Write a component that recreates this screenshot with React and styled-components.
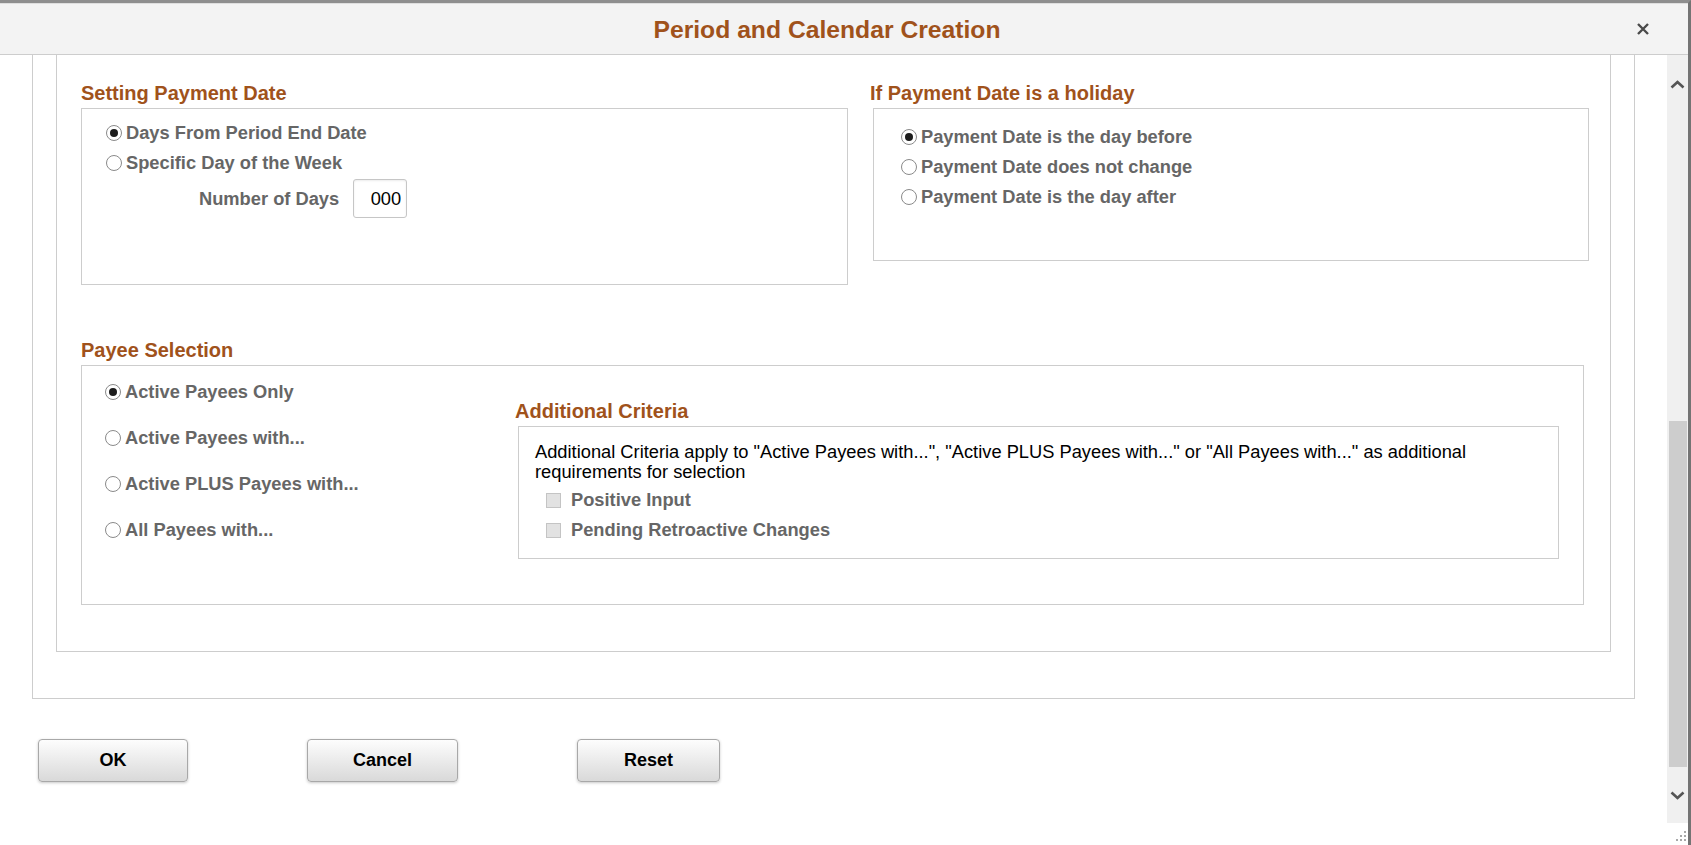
import React from "react";
import styled, { createGlobalStyle } from "styled-components";

const GlobalStyle = createGlobalStyle`
  html, body {
    margin: 0;
    padding: 0;
    background: #fff;
    overflow: hidden;
  }
  body {
    font-family: "Liberation Sans", Arial, sans-serif;
  }
  * {
    box-sizing: border-box;
  }
`;

const BROWN = "#a0521b";

const Window = styled.div`
  width: 1691px;
  height: 845px;
  display: flex;
  flex-direction: column;
  border-top: 3px solid #8e8e8e;
  border-right: 3px solid #747474;
`;

const Header = styled.header`
  height: 52px;
  flex-shrink: 0;
  display: flex;
  align-items: center;
  padding-right: 33px;
  background: #f3f3f3;
  border-top: 1px solid #dedede;
  border-bottom: 1px solid #cdcdcd;
`;

const Title = styled.h1`
  flex: 1;
  margin: 0;
  padding: 2px 0 0 23px;
  text-align: center;
  font-size: 24.7px;
  font-weight: 700;
  color: ${BROWN};
`;

const CloseButton = styled.button`
  width: 24px;
  height: 24px;
  padding: 0;
  border: none;
  background: none;
  display: flex;
  align-items: center;
  justify-content: center;
`;

const Body = styled.div`
  flex: 1;
  min-height: 0;
  display: flex;
`;

const Content = styled.div`
  flex: 1;
  overflow: hidden;
  padding: 0 32px 0 32px;
`;

const Outer = styled.div`
  border: 1px solid #cdcdcd;
  border-top: none;
  padding: 0 23px 46px 23px;
`;

const Inner = styled.div`
  border: 1px solid #cdcdcd;
  border-top: none;
  padding: 27px 21px 46px 24px;
`;

const TopRow = styled.div`
  display: flex;
  gap: 22px;
  align-items: flex-start;
`;

const Column = styled.div`
  width: ${({ $width }) => ($width ? `${$width}px` : "auto")};
  flex: ${({ $width }) => ($width ? "none" : 1)};
`;

const Heading = styled.h2`
  margin: 0 0 3px 0;
  font-size: 20px;
  line-height: 23px;
  font-weight: 700;
  color: ${BROWN};
`;

const Box = styled.div`
  height: ${({ $height }) => `${$height}px`};
  margin-left: ${({ $shift = 0 }) => `${$shift}px`};
  margin-right: ${({ $trim = 0 }) => `${$trim}px`};
  padding: ${({ $pad = "0" }) => $pad};
  border: 1px solid #cdcdcd;
`;

const RadioRow = styled.label`
  display: flex;
  align-items: center;
  height: 30px;
  font-size: 18.3px;
  font-weight: 700;
  color: #666;
`;

const RadioMark = styled.span`
  width: 16px;
  height: 16px;
  margin-right: 4px;
  border-radius: 50%;
  border: 1px solid #8a8a8a;
  background: #fff;
  display: flex;
  align-items: center;
  justify-content: center;
  flex-shrink: 0;

  &::after {
    content: "";
    width: 8px;
    height: 8px;
    border-radius: 50%;
    background: ${({ $checked }) => ($checked ? "#1c1c1c" : "transparent")};
  }
`;

const NumberRow = styled.div`
  display: flex;
  align-items: center;
  margin-top: 1px;
  padding-left: 93px;
  font-size: 18.3px;
  font-weight: 700;
  color: #666;
`;

const NumberInput = styled.input`
  width: 54px;
  height: 39px;
  margin-left: 14px;
  padding: 0 5px 0 0;
  border: 1px solid #c6c6c6;
  border-radius: 3px;
  box-shadow: inset 0 1px 2px rgba(0, 0, 0, 0.08);
  text-align: right;
  font-family: "Liberation Sans", Arial, sans-serif;
  font-size: 18.3px;
  color: #000;
  outline: none;
`;

const PayeeSection = styled.div`
  margin-top: 54px;
`;

const PayeeBox = styled(Box)`
  display: flex;
  align-items: flex-start;
`;

const RadioStack = styled.div`
  width: 433px;
  padding: 11px 0 0 23px;
  display: flex;
  flex-direction: column;
  gap: 16px;
`;

const Criteria = styled.div`
  flex: 1;
  padding-top: 34px;
  margin-right: 24px;
`;

const CriteriaText = styled.p`
  margin: 0;
  font-size: 18.3px;
  line-height: 20px;
  color: #000;
`;

const CheckList = styled.div`
  padding-top: 3px;
`;

const CheckRow = styled.label`
  display: flex;
  align-items: center;
  height: 30px;
  padding-left: 11px;
  font-size: 18.3px;
  font-weight: 700;
  color: #666;
`;

const CheckMark = styled.span`
  width: 15px;
  height: 15px;
  margin-right: 10px;
  background: #e2e2e2;
  border: 1px solid #c4c4c4;
  flex-shrink: 0;
`;

const ButtonRow = styled.div`
  display: flex;
  gap: 119px;
  margin-top: 40px;
  padding-left: 6px;
`;

const Button = styled.button`
  width: ${({ $width }) => `${$width}px`};
  height: 43px;
  border: 1px solid #a8a8a8;
  border-radius: 4px;
  background: linear-gradient(#fdfdfd, #d9d9d9);
  box-shadow: 0 1px 3px rgba(0, 0, 0, 0.22);
  font-family: "Liberation Sans", Arial, sans-serif;
  font-size: 18px;
  font-weight: 700;
  color: #000;
`;

const ScrollBar = styled.div`
  width: 21px;
  flex-shrink: 0;
  display: flex;
  flex-direction: column;
  background: #f0f0f0;
`;

const ArrowZone = styled.div`
  height: ${({ $height }) => `${$height}px`};
  display: flex;
  align-items: center;
  justify-content: center;
`;

const Track = styled.div`
  flex: 1;
  padding: 308px 1px 0 2px;
`;

const Thumb = styled.div`
  height: 346px;
  background: #cdcdcd;
`;

const Corner = styled.div`
  height: 22px;
  background: #fff;
  display: flex;
  align-items: flex-end;
  justify-content: flex-end;
  padding: 0 1px 3px 0;
`;

const Chevron = ({ down }) => (
  <svg width="15" height="9" viewBox="0 0 15 9">
    <path
      d={down ? "M1.5 1.5 L7.5 7 L13.5 1.5" : "M1.5 7.5 L7.5 2 L13.5 7.5"}
      fill="none"
      stroke="#555"
      strokeWidth="2.6"
    />
  </svg>
);

const Grip = () => (
  <svg width="12" height="12" viewBox="0 0 12 12">
    {[
      [9, 1],
      [5, 5],
      [9, 5],
      [1, 9],
      [5, 9],
      [9, 9],
    ].map(([x, y]) => (
      <rect key={`${x}-${y}`} x={x} y={y} width="2" height="2" fill="#a8a8a8" />
    ))}
  </svg>
);

const Radio = ({ checked, children }) => (
  <RadioRow>
    <RadioMark $checked={checked} />
    {children}
  </RadioRow>
);

const Check = ({ children }) => (
  <CheckRow>
    <CheckMark />
    {children}
  </CheckRow>
);

const App = () => {
  return (
    <>
      <GlobalStyle />
      <Window>
        <Header>
          <Title>Period and Calendar Creation</Title>
          <CloseButton aria-label="Close">
            <svg width="12" height="12" viewBox="0 0 12 12">
              <path d="M1 1 L11 11 M11 1 L1 11" stroke="#4a4a4a" strokeWidth="2.4" />
            </svg>
          </CloseButton>
        </Header>

        <Body>
          <Content>
            <Outer>
              <Inner>
                <TopRow>
                  <Column $width={767}>
                    <Heading>Setting Payment Date</Heading>
                    <Box $height={177} $pad="9px 0 0 24px">
                      <Radio checked>Days From Period End Date</Radio>
                      <Radio>Specific Day of the Week</Radio>
                      <NumberRow>
                        Number of Days
                        <NumberInput readOnly value="000" />
                      </NumberRow>
                    </Box>
                  </Column>
                  <Column>
                    <Heading>If Payment Date is a holiday</Heading>
                    <Box $height={153} $shift={3} $pad="13px 0 0 27px">
                      <Radio checked>Payment Date is the day before</Radio>
                      <Radio>Payment Date does not change</Radio>
                      <Radio>Payment Date is the day after</Radio>
                    </Box>
                  </Column>
                </TopRow>

                <PayeeSection>
                  <Heading>Payee Selection</Heading>
                  <PayeeBox $height={240} $trim={5}>
                    <RadioStack>
                      <Radio checked>Active Payees Only</Radio>
                      <Radio>Active Payees with...</Radio>
                      <Radio>Active PLUS Payees with...</Radio>
                      <Radio>All Payees with...</Radio>
                    </RadioStack>
                    <Criteria>
                      <Heading>Additional Criteria</Heading>
                      <Box $height={133} $shift={3} $pad="15px 16px 0 16px">
                        <CriteriaText>
                          Additional Criteria apply to "Active Payees with...", "Active PLUS
                          Payees with..." or "All Payees with..." as additional requirements for
                          selection
                        </CriteriaText>
                        <CheckList>
                          <Check>Positive Input</Check>
                          <Check>Pending Retroactive Changes</Check>
                        </CheckList>
                      </Box>
                    </Criteria>
                  </PayeeBox>
                </PayeeSection>
              </Inner>
            </Outer>

            <ButtonRow>
              <Button $width={150}>OK</Button>
              <Button $width={151}>Cancel</Button>
              <Button $width={143}>Reset</Button>
            </ButtonRow>
          </Content>

          <ScrollBar>
            <ArrowZone $height={58}>
              <Chevron />
            </ArrowZone>
            <Track>
              <Thumb />
            </Track>
            <ArrowZone $height={56}>
              <Chevron down />
            </ArrowZone>
            <Corner>
              <Grip />
            </Corner>
          </ScrollBar>
        </Body>
      </Window>
    </>
  );
};

export default App;
